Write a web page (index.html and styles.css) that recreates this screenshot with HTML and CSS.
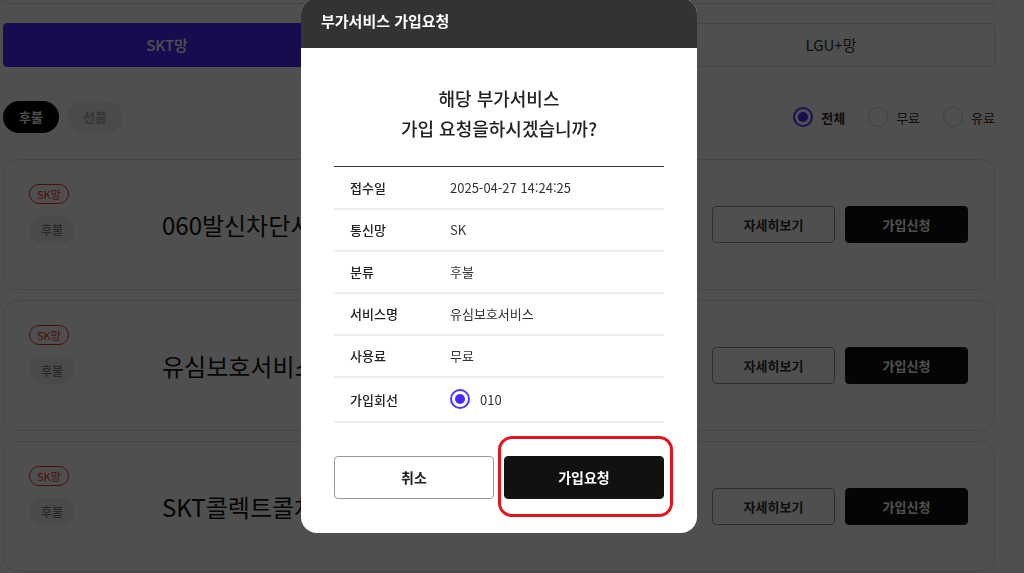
FILE: index.html
```html
<!DOCTYPE html>
<html lang="ko">

<head>
    <meta charset="utf-8" />
    <title>부가서비스 가입요청</title>
    <link rel="stylesheet" href="styles.css">
</head>

<body>
    <div id="wrap">
        <div class="search-box"></div>

        <ul class="tabs">
            <li class="tab current">SKT망</li>
            <li class="tab">KT망</li>
            <li class="tab">LGU+망</li>
        </ul>

        <div class="filter">
            <div class="pills">
                <span class="pill current">후불</span>
                <span class="pill">선불</span>
            </div>
            <div class="radios">
                <label class="radio checked"><i></i>전체</label>
                <label class="radio"><i></i>무료</label>
                <label class="radio"><i></i>유료</label>
            </div>
        </div>

        <div class="list">
            <div class="card">
                <div class="tags">
                    <span class="tag-net">SK망</span>
                    <span class="tag-type">후불</span>
                </div>
                <h3 class="card-title">060발신차단서비스</h3>
                <div class="card-btns">
                    <a href="#" class="btn-line">자세히보기</a>
                    <a href="#" class="btn-dark">가입신청</a>
                </div>
            </div>
            <div class="card">
                <div class="tags">
                    <span class="tag-net">SK망</span>
                    <span class="tag-type">후불</span>
                </div>
                <h3 class="card-title">유심보호서비스</h3>
                <div class="card-btns">
                    <a href="#" class="btn-line">자세히보기</a>
                    <a href="#" class="btn-dark">가입신청</a>
                </div>
            </div>
            <div class="card">
                <div class="tags">
                    <span class="tag-net">SK망</span>
                    <span class="tag-type">후불</span>
                </div>
                <h3 class="card-title">SKT콜렉트콜차단</h3>
                <div class="card-btns">
                    <a href="#" class="btn-line">자세히보기</a>
                    <a href="#" class="btn-dark">가입신청</a>
                </div>
            </div>
        </div>
    </div>

    <!-- 가입요청 팝업 -->
    <div id="dim">
        <div class="modal">
            <div class="modal-head">부가서비스 가입요청</div>
            <div class="modal-body">
                <p class="question">해당 부가서비스<br />가입 요청을하시겠습니까?</p>
                <table class="info">
                    <tr>
                        <th>접수일</th>
                        <td>2025-04-27 14:24:25</td>
                    </tr>
                    <tr>
                        <th>통신망</th>
                        <td>SK</td>
                    </tr>
                    <tr>
                        <th>분류</th>
                        <td>후불</td>
                    </tr>
                    <tr>
                        <th>서비스명</th>
                        <td>유심보호서비스</td>
                    </tr>
                    <tr>
                        <th>사용료</th>
                        <td>무료</td>
                    </tr>
                    <tr class="line-row">
                        <th>가입회선</th>
                        <td><label class="radio checked"><i></i>010</label></td>
                    </tr>
                </table>
                <div class="modal-btns">
                    <a href="#" class="btn-cancel">취소</a>
                    <a href="#" class="btn-ok">가입요청</a>
                </div>
            </div>
            <div class="mark"></div>
        </div>
    </div>
</body>

</html>
```

FILE: styles.css
```css
* {
    margin: 0;
    padding: 0;
    box-sizing: border-box;
}

body {
    font-family: "Noto Sans CJK KR", "Noto Sans", sans-serif;
    font-size: 13px;
    color: #333;
    background: #fff;
    overflow: hidden;
}

li {
    list-style: none;
}

a {
    text-decoration: none;
}

#wrap {
    width: 992px;
    margin-left: 3px;
}

.search-box {
    height: 4px;
    border: 1px solid #ddd;
    border-top: none;
    border-radius: 0 0 10px 10px;
}

/* 통신망 탭 */
.tabs {
    display: flex;
    gap: 4px;
    margin-top: 19px;
}

.tab {
    flex: 1;
    height: 44px;
    line-height: 42px;
    text-align: center;
    font-size: 15px;
    color: #333;
    border: 1px solid #ddd;
    border-radius: 4px;
}

.tab.current {
    color: #fff;
    font-weight: 500;
    background: #4b28ff;
    border-color: #4b28ff;
}

/* 후불/선불, 요금 필터 */
.filter {
    display: flex;
    justify-content: space-between;
    align-items: center;
    margin-top: 34px;
}

.pills {
    display: flex;
    gap: 8px;
}

.pill {
    width: 56px;
    height: 32px;
    line-height: 32px;
    text-align: center;
    border-radius: 16px;
    font-weight: bold;
    color: #aaa;
    background: #eee;
}

.pill.current {
    color: #fff;
    background: #000;
}

.radios {
    display: flex;
    gap: 23px;
}

.radio {
    display: flex;
    align-items: center;
    gap: 8px;
    color: #333;
}

.radio i {
    width: 20px;
    height: 20px;
    border: 1px solid #ccc;
    border-radius: 50%;
    display: flex;
    align-items: center;
    justify-content: center;
}

.radio.checked i {
    border: 2px solid #5534ff;
}

.radio.checked i:after {
    content: "";
    width: 10px;
    height: 10px;
    border-radius: 50%;
    background: #4b28ff;
}

.radios .radio.checked {
    font-weight: bold;
}

/* 서비스 목록 */
.list {
    margin-top: 26px;
}

.card {
    display: flex;
    align-items: center;
    height: 131px;
    margin-bottom: 10px;
    padding: 0 26px 0 25px;
    border: 1px solid #e3e3e3;
    border-radius: 14px;
}

.tags {
    align-self: flex-start;
    margin-top: 24px;
    width: 133px;
    display: flex;
    flex-direction: column;
    align-items: flex-start;
    gap: 12px;
}

.tag-net {
    height: 20px;
    line-height: 18px;
    padding: 0 7px;
    font-size: 11px;
    color: #e0302c;
    border: 1px solid #e0302c;
    border-radius: 10px;
}

.tag-type {
    width: 46px;
    height: 27px;
    line-height: 27px;
    text-align: center;
    font-size: 12px;
    color: #666;
    background: #eee;
    border-radius: 14px;
}

.card-title {
    flex: 1;
    font-size: 24px;
    font-weight: normal;
    color: #111;
}

.card-btns {
    display: flex;
    gap: 10px;
}

.card-btns a {
    width: 123px;
    height: 37px;
    line-height: 35px;
    text-align: center;
    font-weight: bold;
    border-radius: 4px;
}

.btn-line {
    color: #333;
    border: 1px solid #999;
    background: #fff;
}

.btn-dark {
    color: #fff;
    background: #111;
    border: 1px solid #111;
}

/* 팝업 */
#dim {
    position: fixed;
    top: 0;
    left: 0;
    right: 0;
    bottom: 0;
    background: rgba(0, 0, 0, 0.69);
}

.modal {
    position: absolute;
    left: 301px;
    top: -2px;
    width: 396px;
    background: #fff;
    border-radius: 16px;
    overflow: hidden;
}

.modal-head {
    height: 50px;
    line-height: 46px;
    padding-left: 20px;
    font-size: 15px;
    font-weight: bold;
    color: #fff;
    background: #333;
}

.modal-body {
    padding: 35px 33px 34px;
}

.question {
    font-size: 18px;
    font-weight: 500;
    line-height: 30px;
    text-align: center;
    color: #222;
}

.info {
    width: 100%;
    margin-top: 23px;
    border-collapse: collapse;
    border-top: 1px solid #333;
}

.info th,
.info td {
    height: 42px;
    text-align: left;
    font-size: 13px;
    border-bottom: 2px solid #eee;
}

.info th {
    width: 116px;
    padding-left: 16px;
    font-weight: 500;
    color: #222;
}

.info td {
    color: #333;
}

.info .line-row th,
.info .line-row td {
    height: 45px;
}

.info .radio {
    gap: 10px;
}

.modal-btns {
    display: flex;
    gap: 10px;
    margin-top: 33px;
}

.modal-btns a {
    flex: 1;
    height: 43px;
    line-height: 41px;
    text-align: center;
    font-size: 14px;
    font-weight: bold;
    border-radius: 4px;
}

.btn-cancel {
    color: #222;
    background: #fff;
    border: 1px solid #999;
}

.btn-ok {
    color: #fff;
    background: #111;
    border: 1px solid #111;
}

/* 강조 표시 */
.mark {
    position: absolute;
    left: 197px;
    top: 438px;
    width: 175px;
    height: 81px;
    border: 3px solid #e3161e;
    border-radius: 14px;
}
```
